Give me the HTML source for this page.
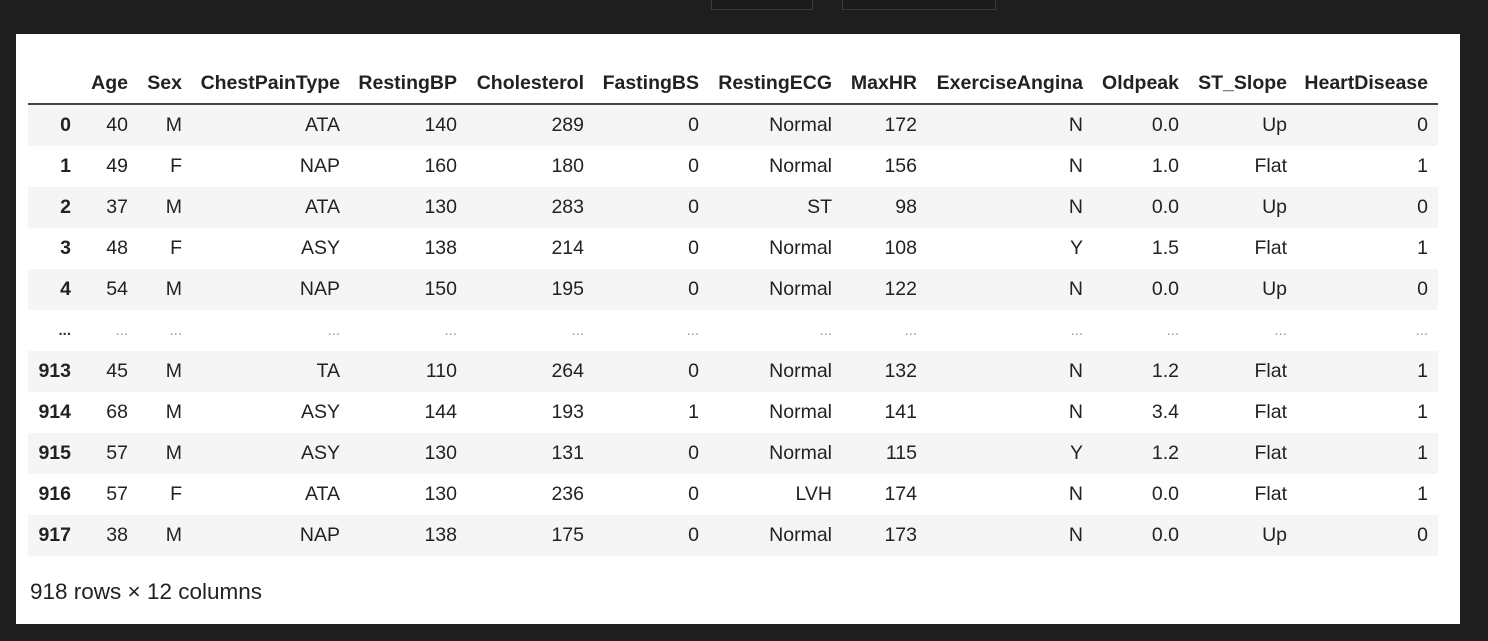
<!DOCTYPE html>
<html><head><style>
body{margin:0;width:1488px;height:641px;background:#1e1e1e;position:relative;overflow:hidden;font-family:"Liberation Sans",Arial,sans-serif;}
.box{position:absolute;top:-1px;height:9px;border:1px solid #3a3a3a;background:#1b1b1b}
.panel{position:absolute;left:16px;top:34px;width:1444px;height:590px;background:#fff}
table{position:absolute;left:12px;top:30px;border-collapse:collapse;table-layout:fixed;color:#222;font-size:19.5px}
th,td{text-align:right;padding:0;white-space:nowrap}
thead th{height:39px;vertical-align:middle;border-bottom:2px solid #444;}
tbody td,tbody th{height:41px}
tbody th{font-weight:bold}
tbody tr:nth-child(odd){background:#f5f5f5}
tbody tr.w{background:#fff}
.d td,.d th{color:#999;font-size:15px}
.f{position:absolute;left:14px;top:545px;font-size:22.5px;color:#222}
</style></head><body>
<div class="box" style="left:711px;width:100px"></div>
<div class="box" style="left:842px;width:152px"></div>
<div class="panel">
<table>
<colgroup><col style="width:43px"><col style="width:57px"><col style="width:54px"><col style="width:158px"><col style="width:117px"><col style="width:127px"><col style="width:115px"><col style="width:133px"><col style="width:85px"><col style="width:166px"><col style="width:96px"><col style="width:108px"><col style="width:151px"></colgroup>
<thead><tr><th></th><th>Age</th><th>Sex</th><th>ChestPainType</th><th>RestingBP</th><th>Cholesterol</th><th>FastingBS</th><th>RestingECG</th><th>MaxHR</th><th>ExerciseAngina</th><th>Oldpeak</th><th>ST_Slope</th><th style="padding-right:10px">HeartDisease</th></tr></thead>
<tbody>
<tr><th>0</th><td>40</td><td>M</td><td>ATA</td><td>140</td><td>289</td><td>0</td><td>Normal</td><td>172</td><td>N</td><td>0.0</td><td>Up</td><td style="padding-right:10px">0</td></tr>
<tr><th>1</th><td>49</td><td>F</td><td>NAP</td><td>160</td><td>180</td><td>0</td><td>Normal</td><td>156</td><td>N</td><td>1.0</td><td>Flat</td><td style="padding-right:10px">1</td></tr>
<tr><th>2</th><td>37</td><td>M</td><td>ATA</td><td>130</td><td>283</td><td>0</td><td>ST</td><td>98</td><td>N</td><td>0.0</td><td>Up</td><td style="padding-right:10px">0</td></tr>
<tr><th>3</th><td>48</td><td>F</td><td>ASY</td><td>138</td><td>214</td><td>0</td><td>Normal</td><td>108</td><td>Y</td><td>1.5</td><td>Flat</td><td style="padding-right:10px">1</td></tr>
<tr><th>4</th><td>54</td><td>M</td><td>NAP</td><td>150</td><td>195</td><td>0</td><td>Normal</td><td>122</td><td>N</td><td>0.0</td><td>Up</td><td style="padding-right:10px">0</td></tr>
<tr class="w d"><th style="color:#333">...</th><td>...</td><td>...</td><td>...</td><td>...</td><td>...</td><td>...</td><td>...</td><td>...</td><td>...</td><td>...</td><td>...</td><td style="padding-right:10px">...</td></tr>
<tr style="background:#f5f5f5"><th>913</th><td>45</td><td>M</td><td>TA</td><td>110</td><td>264</td><td>0</td><td>Normal</td><td>132</td><td>N</td><td>1.2</td><td>Flat</td><td style="padding-right:10px">1</td></tr>
<tr style="background:#fff"><th>914</th><td>68</td><td>M</td><td>ASY</td><td>144</td><td>193</td><td>1</td><td>Normal</td><td>141</td><td>N</td><td>3.4</td><td>Flat</td><td style="padding-right:10px">1</td></tr>
<tr style="background:#f5f5f5"><th>915</th><td>57</td><td>M</td><td>ASY</td><td>130</td><td>131</td><td>0</td><td>Normal</td><td>115</td><td>Y</td><td>1.2</td><td>Flat</td><td style="padding-right:10px">1</td></tr>
<tr style="background:#fff"><th>916</th><td>57</td><td>F</td><td>ATA</td><td>130</td><td>236</td><td>0</td><td>LVH</td><td>174</td><td>N</td><td>0.0</td><td>Flat</td><td style="padding-right:10px">1</td></tr>
<tr style="background:#f5f5f5"><th>917</th><td>38</td><td>M</td><td>NAP</td><td>138</td><td>175</td><td>0</td><td>Normal</td><td>173</td><td>N</td><td>0.0</td><td>Up</td><td style="padding-right:10px">0</td></tr>
</tbody></table>
<div class="f">918 rows × 12 columns</div>
</div>
</body></html>
